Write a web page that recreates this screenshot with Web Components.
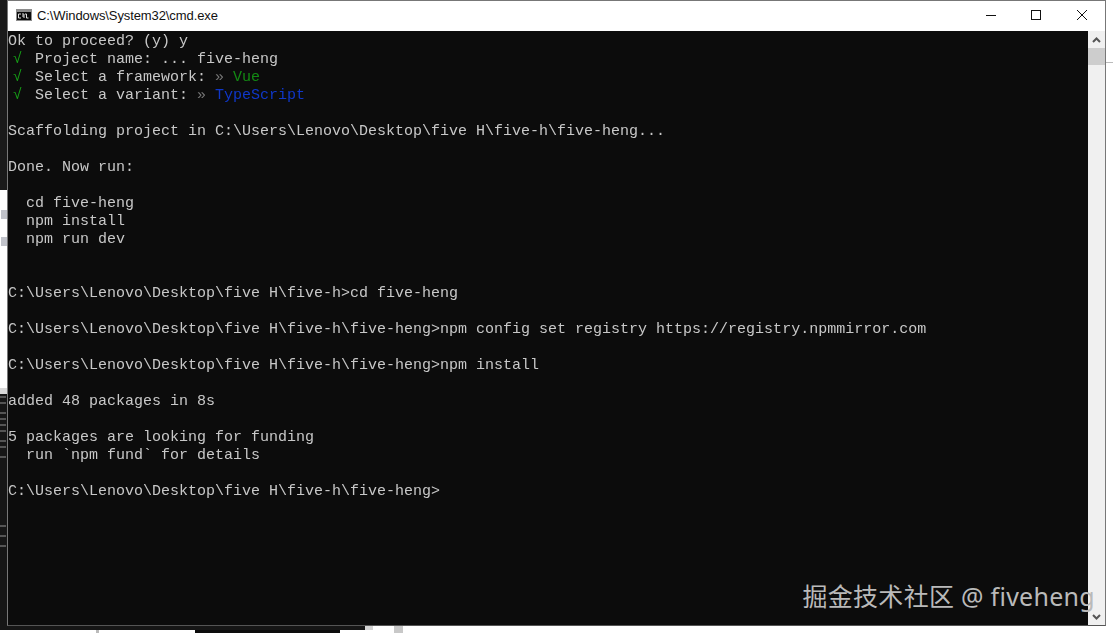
<!DOCTYPE html>
<html lang="en"><head><meta charset="utf-8"><title>cmd</title>
<style>
html,body{margin:0;height:100%;overflow:hidden;background:#fff}
i{font-style:normal}
i.ck{color:#16a116;margin-left:-4px;margin-right:4px}
</style></head><body>
<desk-top>
  <cmd-window title="C:\Windows\System32\cmd.exe">
<term-line>Ok to proceed? (y) y</term-line>
<term-line> <i class="ck">√</i> Project name: ... five-heng</term-line>
<term-line> <i class="ck">√</i> Select a framework: <i style="color:#777">»</i> <i style="color:#138a13">Vue</i></term-line>
<term-line> <i class="ck">√</i> Select a variant: <i style="color:#777">»</i> <i style="color:#0f37c8">TypeScript</i></term-line>
<term-line></term-line>
<term-line>Scaffolding project in C:\Users\Lenovo\Desktop\five H\five-h\five-heng...</term-line>
<term-line></term-line>
<term-line>Done. Now run:</term-line>
<term-line></term-line>
<term-line>  cd five-heng</term-line>
<term-line>  npm install</term-line>
<term-line>  npm run dev</term-line>
<term-line></term-line>
<term-line></term-line>
<term-line>C:\Users\Lenovo\Desktop\five H\five-h>cd five-heng</term-line>
<term-line></term-line>
<term-line>C:\Users\Lenovo\Desktop\five H\five-h\five-heng>npm config set registry https://registry.npmmirror.com</term-line>
<term-line></term-line>
<term-line>C:\Users\Lenovo\Desktop\five H\five-h\five-heng>npm install</term-line>
<term-line></term-line>
<term-line>added 48 packages in 8s</term-line>
<term-line></term-line>
<term-line>5 packages are looking for funding</term-line>
<term-line>  run `npm fund` for details</term-line>
<term-line></term-line>
<term-line>C:\Users\Lenovo\Desktop\five H\five-h\five-heng></term-line>
  </cmd-window>
  <water-mark>掘金技术社区 @ fiveheng</water-mark>
</desk-top>
<script>
function def(name, html, setup){
  customElements.define(name, class extends HTMLElement{
    constructor(){super();const r=this.attachShadow({mode:'open'});r.innerHTML=html;}
    connectedCallback(){ if(setup) setup(this); }
  });
}
def('desk-top',`<style>
:host{display:block;position:relative;width:1113px;height:633px;overflow:hidden;background:#fff}
.left{position:absolute;left:0;top:0;width:8px;height:630px;overflow:hidden;display:flex;flex-direction:column;background:#1a1a1a}
.w{height:198px;margin-top:190px;background:#fff;flex:none;padding-top:20px;box-sizing:border-box}
.w u{display:block;width:6px;margin-left:1px;height:9px;background:#a6aab3;opacity:.7;margin-bottom:18px}
.g{height:6px;background:#d9d9d9;flex:none}
.d{flex:1;background:#161616;overflow:hidden;padding-top:2px}
.d u{display:block;height:2px;width:6px;background:#555;margin-bottom:4px}
.d .s{margin-top:8px}
.d .f{margin-top:67px}
.bottom{position:absolute;left:0;right:0;bottom:0;height:8px;display:flex;flex-direction:column}
.row{display:flex}
.r1{height:5px}.r2{height:3px}
.row b{display:block}
.rule{position:absolute;left:1105px;right:0;top:62px;height:1px;background:#bbb}
</style>
<div class="left">
<div class="w"><u></u><u></u></div><div class="g"></div>
<div class="d"><u></u><u></u><u class="s"></u><u></u><u></u><u></u><u class="s"></u><u></u><u class="s"></u><u class="f"></u><u class="s"></u><u class="s"></u></div>
</div>
<div class="bottom">
<div class="row r1"><b style="width:365px;background:#161616"></b><b style="width:8px;background:#d4d4d4"></b><b style="width:21px;background:#fff"></b><b style="width:9px;background:#c8c8c8"></b><b style="flex:1;background:#fff"></b></div>
<div class="row r2"><b style="width:96px;background:#fff"></b><b style="width:3px;background:#bbb"></b><b style="width:96px;background:#fff"></b><b style="width:145px;background:#0c0c0c"></b><b style="width:54px;background:#fff"></b><b style="width:9px;background:#c8c8c8"></b><b style="flex:1;background:#fff"></b></div>
</div>
<div class="rule"></div>
<slot></slot>`);
def('cmd-window',`<style>
:host{display:flex;flex-direction:column;position:absolute;left:7px;top:0;width:1099px;height:626px;box-sizing:border-box;border:1px solid #777;border-bottom-color:#555;background:#fff}
.bar{height:30px;flex:none;display:flex;align-items:flex-start;background:#fff}
.ico{margin:8px 5px 0 8px;width:16px;height:12px;flex:none;display:block}
.t{flex:1;font:13px/30px "Liberation Sans",Arial,sans-serif;letter-spacing:-.1px;color:#111;white-space:pre}
.btn{width:44px;height:28px;flex:none;display:flex;align-items:center;justify-content:center;margin-right:1px}
.btn.m{margin-right:2px}
.btn svg{display:block}
.main{flex:1;display:flex;min-height:0}
.term{flex:1;background:#0c0c0c;overflow:hidden;min-width:0;padding-top:2px}
.sb{width:17px;flex:none;background:#f0f0f0;display:flex;flex-direction:column;align-items:stretch}
.sb .a{height:17px;display:flex;align-items:center;justify-content:center;flex:none}
.sb .th{height:17px;background:#cdcdcd;flex:none}
.sb .f{flex:1}
</style>
<div class="bar">
<svg class="ico" viewBox="0 0 16 12"><rect width="16" height="12" fill="#8c8c8c"/><rect x="1" y="3" width="14" height="8" fill="#0c0c0c"/><path d="M2.500 5h2.500M2.500 5v4h2.500M6 5h2v4M6 7h2M9 5h1.500v4h2" stroke="#e0e0e0" fill="none" stroke-width="1"/></svg>
<span class="t" id="t"></span>
<span class="btn"><svg width="10" height="10" viewBox="0 0 10 10"><path d="M0 5.500h10" stroke="#111" fill="none"/></svg></span>
<span class="btn m"><svg width="10" height="10" viewBox="0 0 10 10"><rect x=".5" y=".5" width="9" height="9" fill="none" stroke="#111"/></svg></span>
<span class="btn"><svg width="10" height="10" viewBox="0 0 10 10"><path d="M0 0l10 10M10 0L0 10" stroke="#111" fill="none"/></svg></span>
</div>
<div class="main">
<div class="term"><slot></slot></div>
<div class="sb">
<div class="a"><svg width="9" height="6" viewBox="0 0 9 6"><path d="M1 5l3.500-3.500L8 5" stroke="#555" stroke-width="2" fill="none"/></svg></div>
<div class="th"></div><div class="f"></div>
<div class="a"><svg width="9" height="6" viewBox="0 0 9 6"><path d="M1 1l3.500 3.500L8 1" stroke="#555" stroke-width="2" fill="none"/></svg></div>
</div></div>`, el=>{el.shadowRoot.getElementById('t').textContent=el.getAttribute('title');});
def('term-line',`<style>
:host{display:block;height:18px;font:15px/18px "Liberation Mono","Courier New",monospace;color:#c8c8c8;white-space:pre;filter:blur(.3px)}
</style><slot></slot>`);
def('water-mark',`<style>
:host{display:block;position:absolute;right:18px;top:580px;font:400 25px/32px "Noto Sans","Noto Sans CJK SC",sans-serif;letter-spacing:.28px;color:#bababa;white-space:pre}
</style><slot></slot>`);
</script>
</body></html>
